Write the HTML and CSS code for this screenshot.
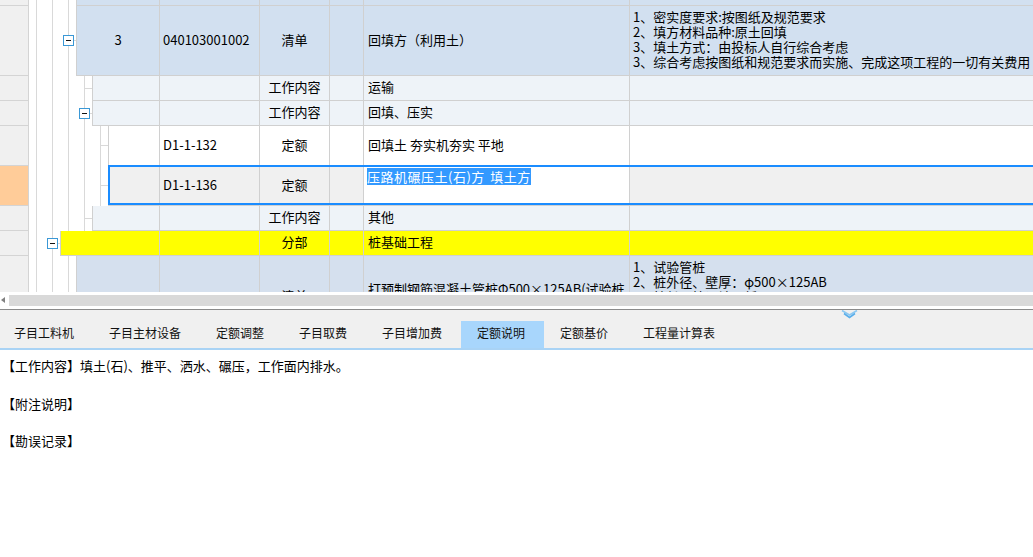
FILE: index.html
```html
<!DOCTYPE html>
<html lang="zh-CN">
<head>
<meta charset="utf-8">
<title>定额说明</title>
<link rel="stylesheet" href="styles.css">
</head>
<body>
<div class="app">
  <div class="grid">
    <div class="row h6 lv1 blue">
      <div class="rh"></div>
      <div class="tree"></div>
      <div class="cells">
        <div class="c seq"></div><div class="c code"></div><div class="c type"></div><div class="c nar"></div><div class="c name"></div><div class="c feat"></div>
      </div>
    </div>
    <div class="row h70 lv1 blue">
      <div class="rh"></div>
      <div class="tree"><i class="minus"></i><i class="stub"></i></div>
      <div class="cells">
        <div class="c seq">3</div><div class="c code">040103001002</div><div class="c type">清单</div><div class="c nar"></div><div class="c name">回填方（利用土）</div>
        <div class="c feat">1、密实度要求:按图纸及规范要求<br>2、填方材料品种:原土回填<br>3、填土方式：由投标人自行综合考虑<br>3、综合考虑按图纸和规范要求而实施、完成这项工程的一切有关费用</div>
      </div>
    </div>
    <div class="row lv2 pale">
      <div class="rh"></div>
      <div class="tree"><i class="tick"></i></div>
      <div class="cells">
        <div class="c seq"></div><div class="c code"></div><div class="c type">工作内容</div><div class="c nar"></div><div class="c name">运输</div><div class="c feat"></div>
      </div>
    </div>
    <div class="row lv2 pale">
      <div class="rh"></div>
      <div class="tree"><i class="minus"></i><i class="stub"></i></div>
      <div class="cells">
        <div class="c seq"></div><div class="c code"></div><div class="c type">工作内容</div><div class="c nar"></div><div class="c name">回填、压实</div><div class="c feat"></div>
      </div>
    </div>
    <div class="row h40 lv3 white">
      <div class="rh"></div>
      <div class="tree"><i class="tick"></i></div>
      <div class="cells">
        <div class="c seq"></div><div class="c code">D1-1-132</div><div class="c type">定额</div><div class="c nar"></div><div class="c name">回填土 夯实机夯实 平地</div><div class="c feat"></div>
      </div>
    </div>
    <div class="row h40 lv3 gray sel">
      <div class="rh cur"></div>
      <div class="tree"><i class="tick"></i></div>
      <div class="cells">
        <div class="c seq"></div><div class="c code">D1-1-136</div><div class="c type">定额</div><div class="c nar"></div><div class="c name edit"><span class="hl">压路机碾压土(石)方 填土方</span></div><div class="c feat"></div>
      </div>
    </div>
    <div class="row lv2 pale">
      <div class="rh"></div>
      <div class="tree"><i class="tick"></i></div>
      <div class="cells">
        <div class="c seq"></div><div class="c code"></div><div class="c type">工作内容</div><div class="c nar"></div><div class="c name">其他</div><div class="c feat"></div>
      </div>
    </div>
    <div class="row lv0 yellow">
      <div class="rh"></div>
      <div class="tree"><i class="minus"></i><i class="stub"></i></div>
      <div class="cells">
        <div class="c seq"></div><div class="c code"></div><div class="c type">分部</div><div class="c nar"></div><div class="c name">桩基础工程</div><div class="c feat"></div>
      </div>
    </div>
    <div class="row h83 lv1 blue2">
      <div class="rh"></div>
      <div class="tree"></div>
      <div class="cells">
        <div class="c seq"></div><div class="c code"></div><div class="c type">清单</div><div class="c nar"></div><div class="c name multi">打预制钢筋混凝土管桩Φ500×125AB(试验桩<br>)</div>
        <div class="c feat">1、试验管桩<br>2、桩外径、壁厚：φ500×125AB<br>3、桩长：按设计图纸</div>
      </div>
    </div>
  </div>

  <div class="hscroll"><span class="arrow"></span><span class="thumb"></span></div>

  <div class="tabs">
    <div class="tab">子目工料机</div>
    <div class="tab">子目主材设备</div>
    <div class="tab">定额调整</div>
    <div class="tab">子目取费</div>
    <div class="tab">子目增加费</div>
    <div class="tab active">定额说明</div>
    <div class="tab">定额基价</div>
    <div class="tab">工程量计算表</div>
    <svg class="chev" width="17" height="9" viewBox="0 0 17 9"><polyline points="1,0.5 8.5,5 16,0.5" fill="none" stroke="#8cc8f2" stroke-width="1.6"/><polyline points="3,3.5 8.5,7.5 14,3.5" fill="none" stroke="#5aaeea" stroke-width="1.6"/></svg>
  </div>

  <div class="desc">
    <p>【工作内容】填土(石)、推平、洒水、碾压，工作面内排水。</p>
    <p>【附注说明】</p>
    <p>【勘误记录】</p>
  </div>
</div>
</body>
</html>
```

FILE: styles.css
```css
* { box-sizing: border-box; margin: 0; padding: 0; }
html, body { width: 1033px; height: 557px; overflow: hidden; background: #fff; }
body { font-family: "Noto Sans CJK SC", sans-serif; font-size: 13px; color: #000; }

.app { display: flex; flex-direction: column; height: 557px; }

/* grid */
.grid { height: 292px; overflow: hidden; flex: none; }
.row { display: flex; height: 25px; flex: none; }
.row.h6 { height: 6px; }
.row.h70 { height: 70px; }
.row.h40 { height: 40px; }
.row.h83 { height: 83px; }

.rh { width: 29px; flex: none; background: #f0f0f0; border-right: 1px solid #d4d4d4; border-bottom: 1px solid #d4d4d4; }
.rh.cur { background: #ffcc99; }

.tree {
  flex: none; display: flex; align-items: center; justify-content: flex-end; padding-bottom: 1px;
  background: repeating-linear-gradient(90deg, transparent 0 7px, #d9d9d9 7px 8px, transparent 8px 16px);
}
.lv0 .tree { width: 31px; }
.lv1 .tree { width: 47px; }
.lv2 .tree { width: 63px; }
.lv3 .tree { width: 79px; }

.tick { display: block; width: 8px; height: 1px; background: #d9d9d9; }
.stub { display: block; width: 2px; height: 1px; background: #d9d9d9; }
.minus {
  display: flex; align-items: center; justify-content: center;
  width: 11px; height: 11px; border: 1px solid #3a98d6; background: #fff;
}
.minus::before { content: ""; width: 5px; height: 1px; background: #111; }

.cells { flex: 1; min-width: 0; display: flex; border-left: 1px solid #d0d0d0; border-bottom: 1px solid #d0d0d0; }
.blue .cells { background: #d2e0f0; }
.blue2 .cells { background: #d5e0ee; }
.pale .cells { background: #eef3f8; }
.white .cells { background: #fff; }
.gray .cells { background: #f0f0f0; }
.yellow .cells { background: #ffff00; }

.c { flex: none; display: flex; align-items: center; padding-bottom: 3px; border-right: 1px solid #d0d0d0; white-space: nowrap; overflow: hidden; }
.seq { justify-content: center; }
.lv0 .seq { width: 99px; }
.lv1 .seq { width: 83px; }
.lv2 .seq { width: 67px; }
.lv3 .seq { width: 51px; }
.code { width: 100px; padding-left: 3px; }
.type { width: 70px; justify-content: center; }
.nar { width: 34px; }
.name { width: 266px; padding-left: 4px; }
.name.multi { line-height: 15px; }
.feat { flex: 1; min-width: 0; border-right: 0; align-items: flex-start; padding: 3px 0 0 3px; line-height: 15px; }

.sel .cells { position: relative; }
.sel .cells::after {
  content: ""; position: absolute; top: -1px; left: -1px; right: 0; bottom: 0;
  border: 2px solid #1a8cff; border-right: 0; pointer-events: none;
}
.name.edit { background: #fff; align-items: flex-start; padding: 2px 0 0 3px; }
.hl { display: inline-block; background: #3399ff; color: #fff; line-height: 17px; height: 17px; letter-spacing: 0.5px; word-spacing: 2px; }

/* horizontal scrollbar */
.hscroll { height: 17px; flex: none; display: flex; align-items: flex-start; padding-top: 3px; background: #fff; }
.arrow { width: 0; height: 0; margin: 2px 4px 0 1px; border-top: 3.5px solid transparent; border-bottom: 3.5px solid transparent; border-right: 4px solid #808080; }
.thumb { flex: 1; height: 11px; background: #d9d9d9; }

/* tabs */
.tabs {
  position: relative; flex: none; height: 41px; display: flex; align-items: flex-end;
  background: #f0f0f0; border-top: 1px solid #8a8a8a; border-bottom: 2px solid #a9d3f5;
}
.tab { height: 27px; padding: 0 19px 0 16px; font-size: 12px; line-height: 24px; color: #111; white-space: nowrap; }
.tab:first-child { margin-left: -2px; }
.tab.active { background: #a8d6fc; }
.chev { position: absolute; left: 841px; top: 0; }

/* description */
.desc { flex: 1; padding: 7px 0 0 2px; background: #fff; }
.desc p { line-height: 18.75px; margin-bottom: 18.75px; font-size: 13px; }
```
